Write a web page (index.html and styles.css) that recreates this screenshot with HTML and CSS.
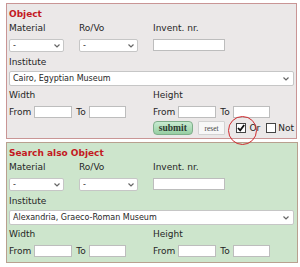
FILE: index.html
```html
<!DOCTYPE html>
<html lang="en">
<head>
    <meta charset="UTF-8">
    <title>Object search</title>
    <link rel="stylesheet" href="styles.css">
</head>
<body>
    <form class="search">
        <!-- Main object -->
        <div class="box box-main">
            <h2 class="box-title">Object</h2>

            <div class="fields-top">
                <label class="field">
                    <span class="lbl">Material</span>
                    <select class="sel sel-material"><option>-</option></select>
                </label>
                <label class="field">
                    <span class="lbl">Ro/Vo</span>
                    <select class="sel sel-rovo"><option>-</option></select>
                </label>
                <label class="field">
                    <span class="lbl">Invent. nr.</span>
                    <input type="text" class="txt txt-invent">
                </label>
            </div>

            <label class="field field-wide">
                <span class="lbl">Institute</span>
                <select class="sel sel-wide"><option>Cairo, Egyptian Museum</option></select>
            </label>

            <div class="fields-range">
                <div class="field">
                    <span class="lbl">Width</span>
                    <div class="range">
                        <span>From</span><input type="text" class="txt txt-range">
                        <span class="to">To</span><input type="text" class="txt txt-range txt-last">
                    </div>
                </div>
                <div class="field">
                    <span class="lbl">Height</span>
                    <div class="range">
                        <span>From</span><input type="text" class="txt txt-range">
                        <span class="to">To</span><input type="text" class="txt txt-range txt-last">
                    </div>
                </div>
            </div>

            <div class="actions">
                <button type="submit" class="btn btn-submit">submit</button>
                <button type="reset" class="btn btn-reset">reset</button>
                <label class="opt opt-or">
                    <span class="chk checked">
                        <svg width="8" height="8" viewBox="0 0 8 8"><path d="M1 4 3.2 6.4 7.2 1" fill="none" stroke="#111" stroke-width="1.8"/></svg>
                        <span class="ring"></span>
                    </span>
                    Or
                </label>
                <label class="opt opt-not">
                    <span class="chk"></span>
                    Not
                </label>
            </div>
        </div>

        <!-- Also search -->
        <div class="box box-also">
            <h2 class="box-title">Search also Object</h2>

            <div class="fields-top">
                <label class="field">
                    <span class="lbl">Material</span>
                    <select class="sel sel-material"><option>-</option></select>
                </label>
                <label class="field">
                    <span class="lbl">Ro/Vo</span>
                    <select class="sel sel-rovo"><option>-</option></select>
                </label>
                <label class="field">
                    <span class="lbl">Invent. nr.</span>
                    <input type="text" class="txt txt-invent">
                </label>
            </div>

            <label class="field field-wide">
                <span class="lbl">Institute</span>
                <select class="sel sel-wide"><option>Alexandria, Graeco-Roman Museum</option></select>
            </label>

            <div class="fields-range">
                <div class="field">
                    <span class="lbl">Width</span>
                    <div class="range">
                        <span>From</span><input type="text" class="txt txt-range">
                        <span class="to">To</span><input type="text" class="txt txt-range txt-last">
                    </div>
                </div>
                <div class="field">
                    <span class="lbl">Height</span>
                    <div class="range">
                        <span>From</span><input type="text" class="txt txt-range">
                        <span class="to">To</span><input type="text" class="txt txt-range txt-last">
                    </div>
                </div>
            </div>
        </div>
    </form>
</body>
</html>
```
FILE: styles.css
```css
* {
    box-sizing: border-box;
    margin: 0;
    padding: 0;
}

body {
    font-family: "DejaVu Sans", Verdana, sans-serif;
    font-size: 9px;
    color: #262626;
    background-color: white;
    padding: 3px 0 0 6px;
}

.box {
    border: 1px solid #c99595;
    background-color: #ebe8e8;
    padding: 3px 2px 3px 2px;
    width: 291px;
}

.box-also {
    margin-top: 3px;
    width: 292px;
    padding-bottom: 5px;
    border-color: #b9a08f;
    background-color: #cde5cc;
}

.box-title {
    font-size: 9px;
    font-weight: bold;
    line-height: 14px;
    color: #c3191f;
}

.field {
    display: block;
}

.lbl {
    display: block;
    line-height: 15px;
}

.fields-top {
    display: grid;
    grid-template-columns: 70px 74px 1fr;
}

.sel {
    appearance: none;
    -webkit-appearance: none;
    display: block;
    height: 13px;
    margin-top: 3px;
    padding: 0 3px;
    border: 1px solid #c6c6c6;
    border-radius: 2px;
    background: white url("data:image/svg+xml,%3Csvg xmlns='http://www.w3.org/2000/svg' width='6' height='4'%3E%3Cpath d='M.5 .5 3 3 5.5 .5' fill='none' stroke='%23666' stroke-width='1.2'/%3E%3C/svg%3E") no-repeat right 3px center;
    font-family: "DejaVu Sans", Verdana, sans-serif;
    font-size: 8px;
    color: #262626;
    outline: none;
}

.sel-material {
    width: 55px;
}

.sel-rovo {
    width: 59px;
}

.txt {
    display: block;
    height: 12px;
    border: 1px solid #bdbdbd;
    background-color: white;
    outline: none;
}

.txt-invent {
    width: 72px;
    margin-top: 3px;
}

.field-wide {
    margin-top: 3px;
}

.sel-wide {
    width: 285px;
    height: 15px;
    margin-top: 1px;
    padding-left: 3px;
    background-position: right 4px center;
}

.fields-range {
    display: grid;
    grid-template-columns: 144px 1fr;
    margin-top: 2px;
}

.range {
    display: flex;
    align-items: center;
    height: 13px;
    margin-top: 2px;
}

.txt-range {
    width: 38px;
    margin-left: 3px;
}

.txt-last {
    width: 37px;
}

.to {
    margin-left: 4px;
}

.actions {
    display: flex;
    align-items: center;
    height: 14px;
    margin-top: 3px;
    margin-left: 144px;
}

.btn {
    height: 14px;
    font-family: "Liberation Serif", "Times New Roman", serif;
    cursor: pointer;
}

.btn-submit {
    width: 40px;
    border: 1px solid #7fae8a;
    border-radius: 4px;
    background: linear-gradient(#c8ebd1, #96cea2);
    font-size: 9.5px;
    font-weight: bold;
    color: #2b3a2f;
}

.btn-reset {
    width: 28px;
    margin-left: 5px;
    border: 1px solid #d2d2d2;
    border-radius: 1px;
    background-color: #f7f7f7;
    font-size: 7.5px;
    color: #444;
}

.opt {
    display: flex;
    align-items: center;
    gap: 3px;
    font-size: 9px;
}

.opt-or {
    margin-left: 11px;
}

.opt-not {
    margin-left: 6px;
    gap: 2px;
}

.chk {
    position: relative;
    display: flex;
    align-items: center;
    justify-content: center;
    width: 10px;
    height: 10px;
    border: 1px solid #444;
    background-color: white;
}

.ring {
    position: absolute;
    left: -9px;
    top: -8px;
    width: 29px;
    height: 29px;
    border: 1.5px solid #d02a2e;
    border-radius: 50%;
}
```
